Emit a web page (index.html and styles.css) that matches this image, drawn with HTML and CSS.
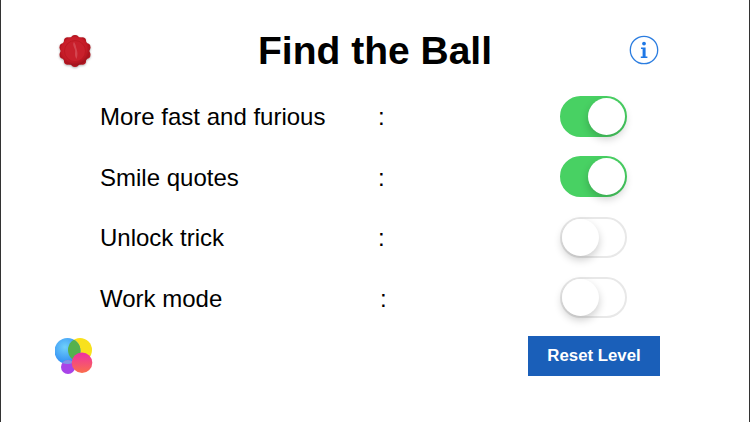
FILE: index.html
```html
<!DOCTYPE html>
<html lang="en">
<head>
  <meta charset="UTF-8" />
  <title>Find the Ball</title>
  <link rel="stylesheet" href="styles.css">
</head>
<body>
  <div class="screen">

    <!-- Header -->
    <div class="header">
      <svg class="seal" viewBox="0 0 32 32">
        <defs>
          <radialGradient id="sealFill" cx="45%" cy="40%" r="60%">
            <stop offset="0%" stop-color="#d62a36" />
            <stop offset="75%" stop-color="#c41a26" />
            <stop offset="100%" stop-color="#9c121c" />
          </radialGradient>
        </defs>
        <g fill="#b3151f">
          <circle cx="16" cy="4" r="4" />
          <circle cx="23.100" cy="6.300" r="4" />
          <circle cx="27.500" cy="12.300" r="4" />
          <circle cx="27.500" cy="19.700" r="4" />
          <circle cx="23.100" cy="25.700" r="4" />
          <circle cx="16" cy="28" r="4" />
          <circle cx="8.900" cy="25.700" r="4" />
          <circle cx="4.500" cy="19.700" r="4" />
          <circle cx="4.500" cy="12.300" r="4" />
          <circle cx="8.900" cy="6.300" r="4" />
        </g>
        <circle cx="16" cy="16" r="14.500" fill="url(#sealFill)" />
        <circle cx="16" cy="16" r="10.500" fill="#c8202c" stroke="#b3151f" stroke-width=".6" />
        <path d="M15 7c-2 3 .5 5 1 8s-1 5 1.500 9c1.500-4 1-7 .2-9.500s-.7-5-2.700-7.500z" fill="#e2707a" opacity=".45" />
      </svg>
      <h1>Find the Ball</h1>
      <svg class="info" viewBox="0 0 30 30">
        <circle cx="15" cy="15" r="13.700" fill="none" stroke="#2b7de0" stroke-width="1.300" />
        <circle cx="15" cy="8.600" r="1.900" fill="#1f78e6" />
        <path d="M12 12.400h4.600v9.200h1.800v1.500h-6.600v-1.500h1.800v-7.700h-1.600z" fill="#1f78e6" />
      </svg>
    </div>

    <!-- Settings -->
    <div class="settings">
      <div class="row">
        <span class="label">More fast and furious</span>
        <span class="colon">:</span>
        <span class="toggle on"></span>
      </div>
      <div class="row">
        <span class="label">Smile quotes</span>
        <span class="colon">:</span>
        <span class="toggle on"></span>
      </div>
      <div class="row">
        <span class="label">Unlock trick</span>
        <span class="colon">:</span>
        <span class="toggle"></span>
      </div>
      <div class="row">
        <span class="label">Work mode</span>
        <span class="colon shifted">:</span>
        <span class="toggle"></span>
      </div>
    </div>

    <!-- Footer -->
    <div class="footer">
      <svg class="bubbles" viewBox="0 0 40 40">
        <defs>
          <radialGradient id="blue" cx="40%" cy="35%" r="70%">
            <stop offset="0%" stop-color="#6fd0fb" />
            <stop offset="100%" stop-color="#2b86f3" />
          </radialGradient>
          <linearGradient id="pink" x1="0" y1="0" x2="0" y2="1">
            <stop offset="0%" stop-color="#ee2fa6" />
            <stop offset="100%" stop-color="#fb6d4c" />
          </linearGradient>
          <clipPath id="blueClip">
            <circle cx="12.500" cy="15" r="13" />
          </clipPath>
        </defs>
        <circle cx="25" cy="14" r="12" fill="#f8e11d" />
        <circle cx="12.500" cy="15" r="13" fill="url(#blue)" />
        <circle cx="25" cy="14" r="12" fill="#55b14e" clip-path="url(#blueClip)" />
        <circle cx="13" cy="31" r="7" fill="#a843e8" />
        <circle cx="13" cy="31" r="7" fill="#7f93e6" clip-path="url(#blueClip)" />
        <circle cx="27" cy="26.700" r="10.300" fill="url(#pink)" />
      </svg>
      <button class="reset">Reset Level</button>
    </div>

  </div>
</body>
</html>
```

FILE: styles.css
```css
* {
  margin: 0;
  padding: 0;
  box-sizing: border-box;
}

body {
  width: 750px;
  height: 422px;
  overflow: hidden;
  background: white;
  font-family: 'Liberation Sans', Arial, sans-serif;
  color: black;
}

.screen {
  height: 422px;
  border-left: 1px solid #333;
  border-right: 1px solid #333;
  padding: 0 54px;
  display: flex;
  flex-direction: column;
}

.header {
  height: 86px;
  padding-top: 15px;
  display: grid;
  grid-template-columns: 1fr auto 1fr;
  align-items: center;
}

.header h1 {
  font-size: 39px;
  line-height: 50px;
}

.seal {
  width: 32px;
  height: 32px;
  margin-left: 4px;
  filter: drop-shadow(0 1px 1px rgba(0, 0, 0, 0.3));
}

.info {
  width: 30px;
  height: 30px;
  justify-self: end;
  margin-right: 36px;
  margin-top: -2px;
}

.settings {
  padding-left: 45px;
}

.row {
  height: 60.500px;
  display: flex;
  align-items: center;
  font-size: 24px;
}

.label {
  width: 278px;
  padding-top: 2px;
}

.colon {
  width: 182px;
  padding-top: 2px;
}

.colon.shifted {
  margin-left: 2px;
  margin-right: -2px;
}

.toggle {
  width: 67px;
  height: 41px;
  border-radius: 21px;
  border: 2px solid #e8e8e8;
  background: white;
  display: flex;
  align-items: center;
}

.toggle::after {
  content: '';
  width: 37px;
  height: 37px;
  border-radius: 50%;
  background: white;
  box-shadow: 0 4px 8px rgba(0, 0, 0, 0.2);
}

.toggle.on {
  background: #48d163;
  border-color: #48d163;
  justify-content: flex-end;
}

.footer {
  display: flex;
  align-items: flex-start;
  justify-content: space-between;
  margin-top: 8px;
  padding-right: 35px;
}

.bubbles {
  width: 40px;
  height: 40px;
}

.reset {
  width: 132px;
  height: 40px;
  background: #1a5fb9;
  color: white;
  border: none;
  font-family: inherit;
  font-size: 16.800px;
  font-weight: 700;
}
```
